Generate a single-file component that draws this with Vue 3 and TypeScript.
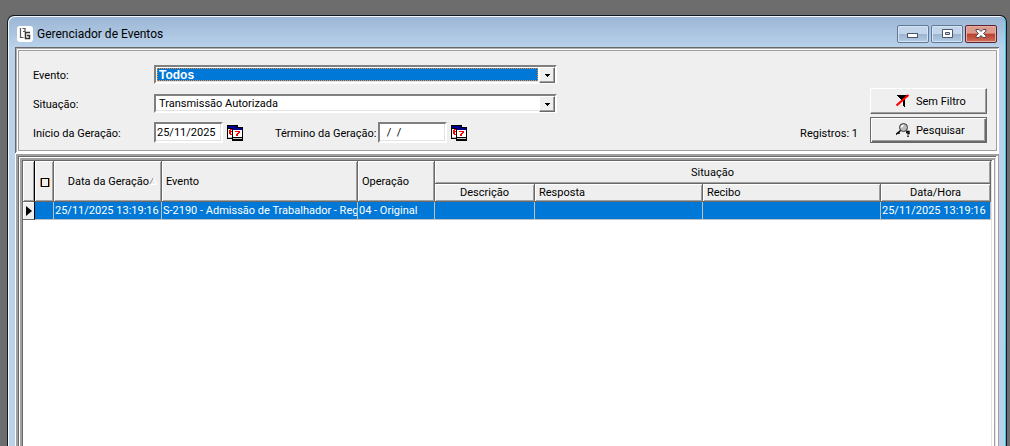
<script setup lang="ts">
import { ref } from 'vue'

interface EventRow {
  id: number
  generatedAt: string
  event: string
  operation: string
  description: string
  response: string
  receipt: string
  dateTime: string
}

const eventFilter = ref('Todos')
const statusFilter = ref('Transmissão Autorizada')
const startDate = ref('25/11/2025')
const endDate = ref('  /  /')
const rows = ref<EventRow[]>([
  {
    id: 1,
    generatedAt: '25/11/2025 13:19:16',
    event: 'S-2190 - Admissão de Trabalhador - Reg',
    operation: '04 - Original',
    description: '',
    response: '',
    receipt: '',
    dateTime: '25/11/2025 13:19:16',
  },
])
</script>

<template>
  <main class="window">
    <header class="titlebar">
      <svg class="app-icon" viewBox="0 0 16 16" aria-hidden="true">
        <rect width="16" height="16" rx="3" fill="#fff" />
        <path d="M3.500 2v9.500h3M5.500 2.500h2.500v3H6" fill="none" stroke="#555" stroke-width="1.200" />
        <path d="M13 6.500H8.500v6H12.500v-3h-2.500" fill="none" stroke="#333" stroke-width="1.500" />
      </svg>
      <h1>Gerenciador de Eventos</h1>
      <div class="controls">
        <button type="button" aria-label="Minimizar">
          <svg viewBox="0 0 14 12"><rect x="1.500" y="5.500" width="10" height="4" fill="#fff" stroke="#4d5666" /></svg>
        </button>
        <button type="button" aria-label="Maximizar">
          <svg viewBox="0 0 14 12"><path d="M2.500 1.500h10v8h-10zM5.500 4.500h4v2h-4z" fill="#fff" fill-rule="evenodd" stroke="#4d5666" /></svg>
        </button>
        <button type="button" class="close" aria-label="Fechar">
          <svg viewBox="0 0 14 12"><path d="M2 1.500h3l2 2 2-2h3v1.500L9.500 5.500 12 8v1.500H9l-2-2-2 2H2V8l2.500-2.500L2 3z" fill="#fff" stroke="#4d4a55" /></svg>
        </button>
      </div>
    </header>

    <section class="filters">
      <div class="fields">
        <label for="evento">Evento:</label>
        <div class="combo focused">
          <select id="evento" v-model="eventFilter"><option>Todos</option></select>
          <span class="arrow"><svg viewBox="0 0 5 3"><path d="M0 0h5v1H4v1H3v1H2V2H1V1H0z" /></svg></span>
        </div>
        <label for="situacao">Situação:</label>
        <div class="combo">
          <select id="situacao" v-model="statusFilter"><option>Transmissão Autorizada</option></select>
          <span class="arrow"><svg viewBox="0 0 5 3"><path d="M0 0h5v1H4v1H3v1H2V2H1V1H0z" /></svg></span>
        </div>
        <label for="inicio">Início da Geração:</label>
        <div class="dates">
          <input id="inicio" v-model="startDate" type="text" />
          <button type="button" class="calendar" aria-label="Escolher data de início">
            <svg viewBox="0 0 16 16" shape-rendering="crispEdges">
              <path d="M0 0h11v2h5v14H5v-2H0z" />
              <path d="M1 4h4v8H1z" fill="#fff" />
              <path d="M1 1h9v2H1zM6 3h9v2H6z" fill="#000090" />
              <path d="M6 5h9v7H6z" fill="#fff" />
              <path d="M5 4H3v1H2v4h1v1h2V9H4V7h1V6H4V5h1zM8 6h5v2h-1v1h-1v2H9V9h1V8h1V7H8z" fill="red" />
              <path d="M6 13h9v1H6zM1 12h4v1H1z" fill="#c0c0c0" />
            </svg>
          </button>
          <label for="termino">Término da Geração:</label>
          <input id="termino" v-model="endDate" type="text" />
          <button type="button" class="calendar" aria-label="Escolher data de término">
            <svg viewBox="0 0 16 16" shape-rendering="crispEdges">
              <path d="M0 0h11v2h5v14H5v-2H0z" />
              <path d="M1 4h4v8H1z" fill="#fff" />
              <path d="M1 1h9v2H1zM6 3h9v2H6z" fill="#000090" />
              <path d="M6 5h9v7H6z" fill="#fff" />
              <path d="M5 4H3v1H2v4h1v1h2V9H4V7h1V6H4V5h1zM8 6h5v2h-1v1h-1v2H9V9h1V8h1V7H8z" fill="red" />
              <path d="M6 13h9v1H6zM1 12h4v1H1z" fill="#c0c0c0" />
            </svg>
          </button>
        </div>
      </div>
      <p class="count">Registros: {{ rows.length }}</p>
      <div class="actions">
        <button type="button">
          <svg viewBox="0 0 14 14">
            <path d="M1 1h11v1h-1v1h-1v1H9v9H8v-1H7V7H6V6H5V5H4V4H3V3H2V2H1z" />
            <path d="M.5 11.500L12.500 1" fill="none" stroke="#f00" stroke-width="2.200" />
          </svg>
          Sem Filtro
        </button>
        <button type="button" class="default">
          <svg viewBox="0 0 14 14">
            <circle cx="7.500" cy="4.500" r="4" fill="#bbb" stroke="#333" />
            <path d="M5.500 4.500a2 2 0 0 1 2-2" fill="none" stroke="#fff" stroke-width="1.500" />
            <path d="M4.500 7.500L0 11.500M3 8.500v2.500M10 9.500h1V8.500h2v2h-1v1M12 12.500v1.500" fill="none" stroke="#000" stroke-width="1.400" />
          </svg>
          Pesquisar
        </button>
      </div>
    </section>

    <section class="frame">
      <div class="grid">
        <table>
          <colgroup>
            <col class="w-mark" /><col class="w-check" /><col class="w-date" /><col class="w-event" />
            <col class="w-op" /><col class="w-desc" /><col class="w-resp" /><col /><col class="w-time" />
          </colgroup>
          <thead>
            <tr class="top">
              <th rowspan="2" class="marker"></th>
              <th rowspan="2" class="check"><input type="checkbox" aria-label="Selecionar todos" /></th>
              <th rowspan="2" class="sorted">
                <span>Data da Geração<svg viewBox="0 0 8 8"><path d="M.5 7.500L4.500.5" stroke="#909090" /><path d="M4.500.5L7.500 7.500H.5" fill="none" stroke="#fff" /></svg></span>
              </th>
              <th rowspan="2">Evento</th>
              <th rowspan="2">Operação</th>
              <th colspan="4" class="center">Situação</th>
            </tr>
            <tr class="sub">
              <th class="center">Descrição</th>
              <th>Resposta</th>
              <th>Recibo</th>
              <th class="center">Data/Hora</th>
            </tr>
          </thead>
          <tbody>
            <tr v-for="row in rows" :key="row.id">
              <td class="current"><svg viewBox="0 0 6 10"><path d="M0 0l6 5-6 5z" /></svg></td>
              <td></td>
              <td>{{ row.generatedAt }}</td>
              <td>{{ row.event }}</td>
              <td>{{ row.operation }}</td>
              <td>{{ row.description }}</td>
              <td>{{ row.response }}</td>
              <td>{{ row.receipt }}</td>
              <td>{{ row.dateTime }}</td>
            </tr>
          </tbody>
        </table>
      </div>
    </section>
  </main>
</template>

<style>
body {
  margin: 0;
  background: #6d6d6d;
}
#app {
  display: flex;
  min-height: 100vh;
}
</style>

<style scoped>
* {
  box-sizing: border-box;
}
.window {
  flex: 1;
  min-width: 0;
  display: flex;
  flex-direction: column;
  margin: 15px 3px 0 7px;
  padding: 0 7px;
  border: 1px solid #101820;
  border-bottom: 0;
  border-radius: 7px 7px 0 0;
  background: linear-gradient(#9ab5d4, #bad2eb 32px, #b9d1ea);
  box-shadow: inset 1px 1px #f4f8fc, inset -1px 0 #35c5e8;
  font: 11px/13px Roboto, "Liberation Sans", Arial, sans-serif;
  color: #000;
}
button,
input,
select {
  font: inherit;
  color: inherit;
  margin: 0;
}
svg {
  display: block;
}
.titlebar {
  display: flex;
  align-items: center;
  height: 31px;
  padding: 5px 2px 0;
}
.app-icon {
  width: 16px;
  height: 16px;
}
h1 {
  flex: 1;
  margin: 0 0 0 4px;
  font: 12px/16px Roboto, "Segoe UI", sans-serif;
}
.controls {
  display: flex;
  gap: 2px;
}
.controls button {
  display: grid;
  place-items: center;
  width: 32px;
  height: 18px;
  padding: 0;
  border: 1px solid #5f7999;
  border-radius: 2px;
  background: linear-gradient(#c3d5ea 50%, #9ab3d0 50%, #b5cce5);
  box-shadow: inset 0 0 0 1px #d5e3f2;
}
.controls .close {
  border-color: #5e2330;
  background: linear-gradient(#dd9b8d 45%, #b8402b 50%, #d0705a);
  box-shadow: inset 0 0 0 1px #e6aea2;
}
.controls svg {
  width: 14px;
  height: 12px;
}
.filters {
  display: flex;
  align-items: flex-end;
  height: 106px;
  padding: 12px 12px 5px 18px;
  background: #efefef;
  box-shadow: inset 1px 1px #696969, inset -1px -1px #fff, inset 2px 2px #b0b0b0, inset -2px -2px #fff,
    inset 3px 3px #fff, inset -3px -3px #a0a0a0, inset 4px 4px #a0a0a0;
}
.fields {
  display: grid;
  grid-template-columns: 121px 403px;
  grid-auto-rows: 29px;
  align-items: center;
}
.combo {
  display: flex;
  height: 19px;
  margin-bottom: 2px;
  border: 2px solid;
  border-color: #808080 #fff #fff #808080;
  background: #fff;
  box-shadow: inset -1px -1px #e3e3e3;
}
.combo select {
  appearance: none;
  flex: 1;
  min-width: 0;
  height: 15px;
  padding: 0 3px;
  border: 0;
  border-radius: 0;
  outline: 0;
  background: transparent;
}
.combo.focused select {
  margin: 1px;
  height: 13px;
  padding: 0 1px;
  border: 1px dotted #ff8728;
  background: #0078d7;
  color: #fff;
  font: bold 12px/12px "Liberation Sans", Arial, sans-serif;
}
.arrow {
  display: grid;
  place-items: center;
  width: 16px;
  height: 16px;
  border: 1px solid;
  border-color: #fff #696969 #696969 #fff;
  background: #efefef;
  box-shadow: inset -1px -1px #a0a0a0;
  pointer-events: none;
}
.arrow svg {
  width: 5px;
  height: 3px;
}
.dates {
  display: flex;
  align-items: center;
}
.dates input {
  width: 69px;
  height: 21px;
  margin-bottom: 2px;
  padding: 0 1px 1px;
  border: 2px solid;
  border-color: #808080 #fff #fff #808080;
  box-shadow: inset -1px -1px #e3e3e3;
  white-space: pre;
}
.dates label {
  margin: 0 2px 0 32px;
  white-space: nowrap;
}
.calendar {
  width: 16px;
  height: 16px;
  margin: 0 0 2px 4px;
  padding: 0;
  border: 0;
  background: none;
}
.count {
  margin: 0 12px 8px auto;
  white-space: nowrap;
}
.actions {
  display: grid;
  gap: 3px;
  padding-bottom: 5px;
}
.actions button {
  display: flex;
  align-items: center;
  gap: 6px;
  width: 117px;
  height: 26px;
  padding: 0 0 0 25px;
  border: 1px solid;
  border-color: #fff #696969 #696969 #fff;
  background: #efefef;
  box-shadow: inset -1px -1px #a0a0a0;
}
.actions .default {
  border-color: #696969;
  box-shadow: inset 1px 1px #fff, inset -1px -1px #696969, inset -2px -2px #a0a0a0;
}
.actions svg {
  width: 14px;
  height: 14px;
}
.frame {
  flex: 1;
  display: flex;
  padding: 4px 4px 0;
  background: #fff;
  box-shadow: inset 1px 1px #fff, inset -1px 0 #a0a0a0, inset 3px 3px #a0a0a0, inset -3px 0 #fff,
    inset 4px 4px #696969, inset -4px 0 #e3e3e3;
}
.grid {
  flex: 1;
  min-width: 0;
  padding: 4px 4px 0;
  box-shadow: inset 1px 1px #fff, inset -1px 0 #a0a0a0, inset 3px 3px #a0a0a0, inset -3px 0 #fff,
    inset 4px 4px #696969, inset -4px 0 #e3e3e3;
}
table {
  width: 100%;
  table-layout: fixed;
  border-spacing: 0;
}
.w-mark { width: 12px; }
.w-check { width: 19px; }
.w-date { width: 108px; }
.w-event { width: 196px; }
.w-op { width: 77px; }
.w-desc { width: 100px; }
.w-resp { width: 168px; }
.w-time { width: 110px; }
th {
  padding: 0 4px;
  border: solid #696969;
  border-width: 0 1px 1px 0;
  background: #efefef;
  box-shadow: inset 1px 1px #fff, inset -1px -1px #a0a0a0;
  font-weight: normal;
  text-align: left;
  white-space: nowrap;
}
.top {
  height: 23px;
}
.sub {
  height: 18px;
}
.center {
  text-align: center;
}
th.marker {
  border-right-color: #000;
}
th.check {
  padding: 0 0 0 1px;
}
.check input {
  appearance: none;
  display: block;
  width: 8px;
  height: 9px;
  margin: 2px auto 0;
  border: 1px solid #000;
  box-shadow: -1px 0 #d08a3c, 1px 0 #d08a3c;
}
.sorted span {
  display: flex;
  justify-content: flex-end;
  align-items: center;
}
.sorted svg {
  width: 8px;
  height: 8px;
}
th.sorted {
  padding: 0 4px 0 0;
}
tbody tr {
  height: 18px;
}
td {
  padding: 0 0 0 1px;
  overflow: hidden;
  border: solid #c0c0c0;
  border-width: 0 1px 1px 0;
  background: #0078d7;
  color: #fff;
  white-space: nowrap;
}
td.current {
  padding: 0 0 0 3px;
  border-color: #000 #000 #696969;
  background: #efefef;
  box-shadow: inset 1px 1px #fff;
  color: #000;
}
.current svg {
  width: 6px;
  height: 10px;
}
</style>
